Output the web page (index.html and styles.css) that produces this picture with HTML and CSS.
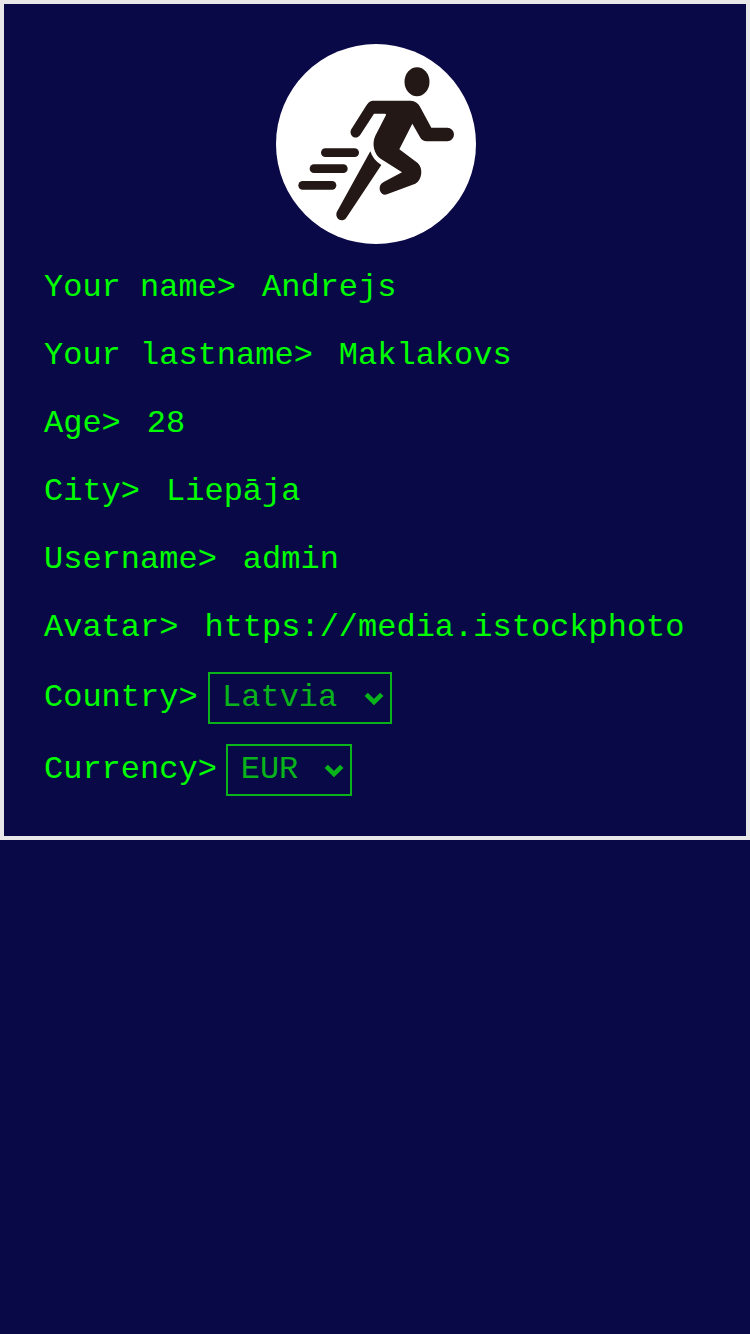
FILE: index.html
```html
<!DOCTYPE html>
<html lang="en">
<head>
<meta charset="utf-8">
<title>Profile</title>
<link rel="stylesheet" href="styles.css">
</head>
<body>
<main class="profile">
  <svg class="avatar" viewBox="18 12 600 600" role="img" aria-label="Avatar">
    <ellipse cx="441" cy="125" rx="37.5" ry="43.5"/>
    <path d="M308 182H422Q441 183 450 200L484 263H532A19.5 20 0 0 1 532 304H470Q457 303 451 293L427 251L388 328L443 369C460 384 457 420 436 431L351 463C333 470 322 444 334 431Q336 429 341 426L396 397L333 357C311 342 305 310 316 287L348 225Q349 221 344 221H312L270 286C257 302 236 287 243 269L288 198Q296 183 308 182Z"/>
    <path d="M301 334Q309 360 334 375L228 535C216 549 194 537 200 517Z"/>
    <rect x="153" y="325" width="114" height="26" rx="13"/>
    <rect x="119" y="373" width="114" height="26" rx="13"/>
    <rect x="85" y="423" width="114" height="26" rx="13"/>
  </svg>
  <div class="row"><span>Your name&gt;</span><span class="value">Andrejs</span></div>
  <div class="row"><span>Your lastname&gt;</span><span class="value">Maklakovs</span></div>
  <div class="row"><span>Age&gt;</span><span class="value">28</span></div>
  <div class="row"><span>City&gt;</span><span class="value">Liepāja</span></div>
  <div class="row"><span>Username&gt;</span><span class="value">admin</span></div>
  <div class="row"><span>Avatar&gt;</span><span class="value">https://media.istockphoto</span></div>
  <div class="row choice"><span>Country&gt;</span>
    <div class="select country"><span>Latvia</span><svg class="chevron" viewBox="0 0 20 14"><path d="M2.2 2.3L10 10.1L17.8 2.3"/></svg></div>
  </div>
  <div class="row choice"><span>Currency&gt;</span>
    <div class="select currency"><span>EUR</span><svg class="chevron" viewBox="0 0 20 14"><path d="M2.2 2.3L10 10.1L17.8 2.3"/></svg></div>
  </div>
</main>
</body>
</html>
```
FILE: styles.css
```css
* {
  box-sizing: border-box;
}

body {
  margin: 0;
  background: #090947;
  color: #00ff00;
  font: 32px "Liberation Mono", monospace;
}

.profile {
  display: flex;
  flex-direction: column;
  gap: 20px;
  padding: 40px 38px 40px 40px;
  border: 4px solid #e8e8e8;
}

.avatar {
  width: 200px;
  height: 200px;
  margin: 0 auto;
  border-radius: 50%;
  background: #fff;
  fill: #231815;
}

.row {
  display: flex;
  align-items: center;
  height: 48px;
  white-space: nowrap;
}

.row span {
  padding-bottom: 2px;
}

.value {
  margin-left: 26px;
}

.choice {
  height: 52px;
}

.select {
  display: flex;
  align-items: center;
  justify-content: space-between;
  height: 52px;
  padding: 0 6px 0 12px;
  border: 2px solid #08b41a;
  color: #08b41a;
}

.country {
  width: 184px;
  margin-left: 10.4px;
}

.currency {
  width: 126px;
  margin-left: 9.2px;
  padding-left: 12.7px;
}

.chevron {
  width: 20px;
  height: 14px;
  margin-top: 2px;
  fill: none;
  stroke: currentColor;
  stroke-width: 4.6;
}
```
